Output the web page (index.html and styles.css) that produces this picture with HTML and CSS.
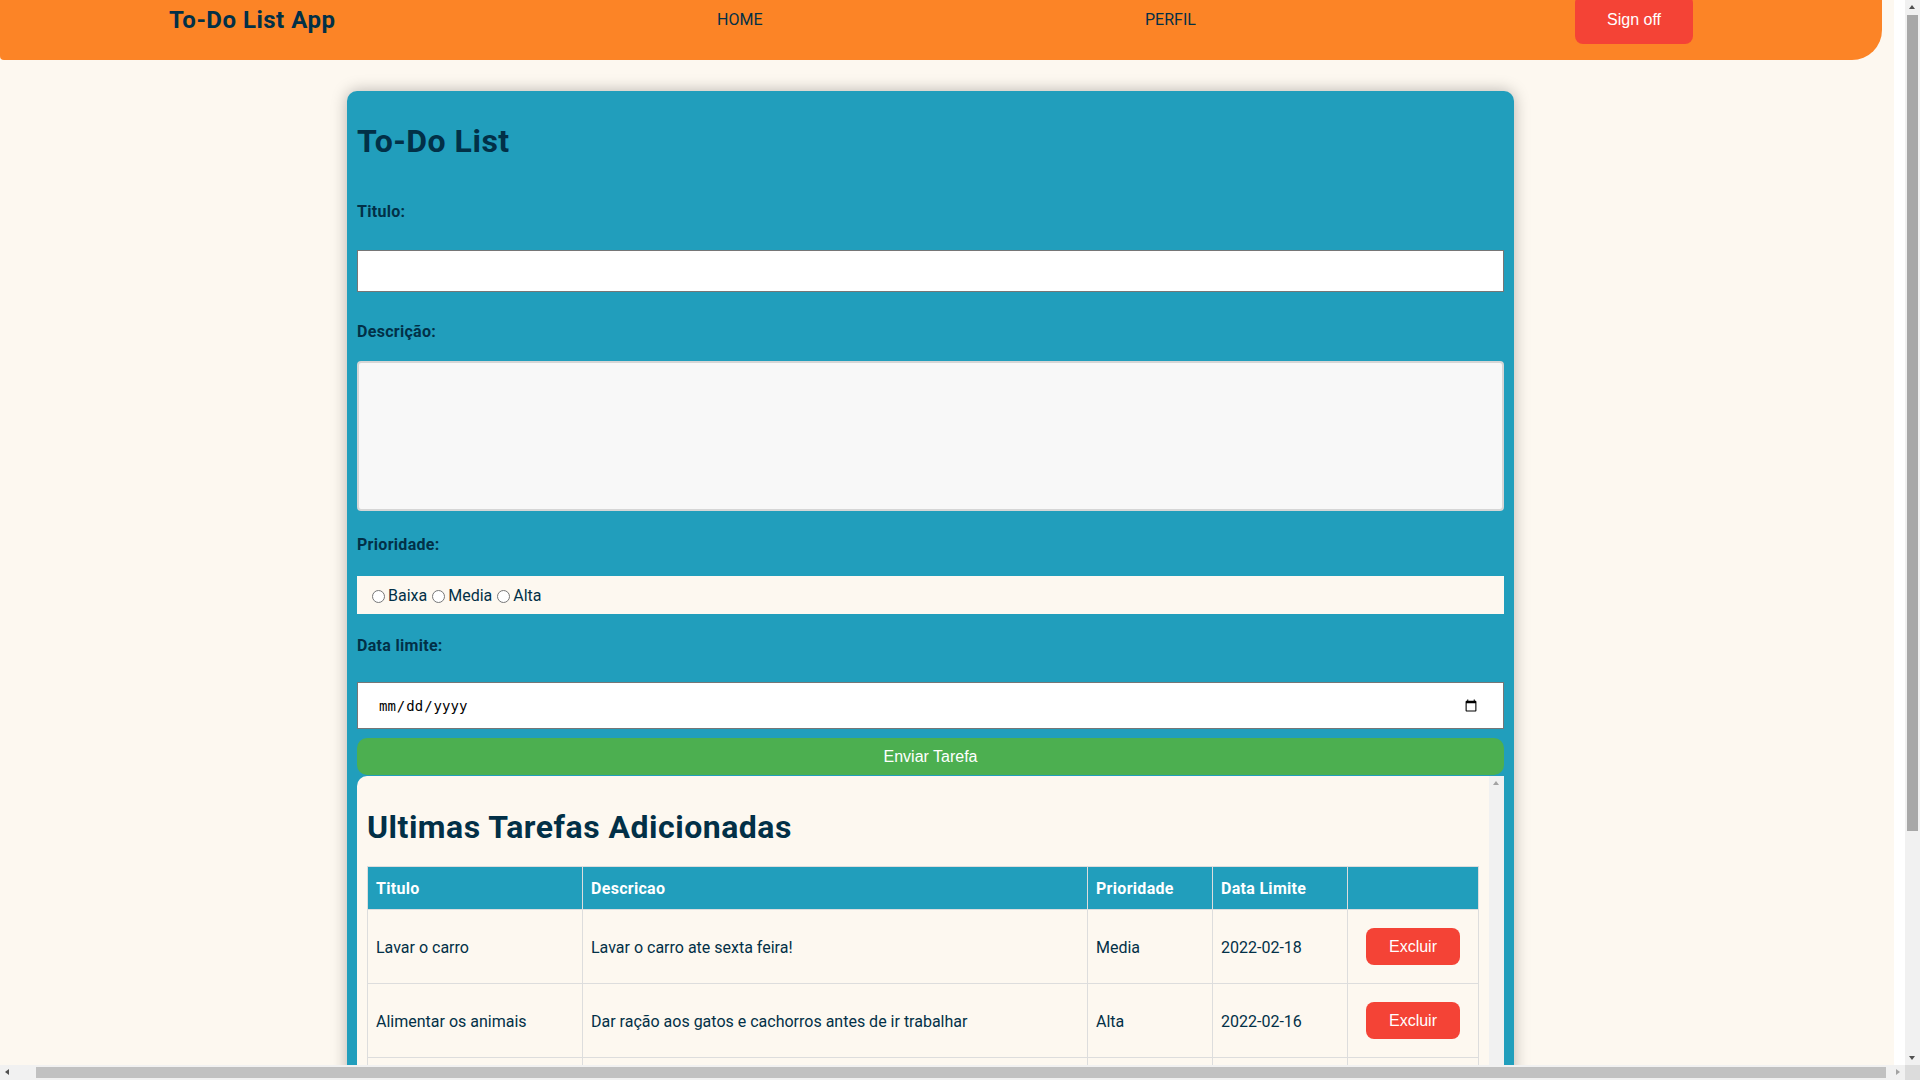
FILE: index.html
```html
<!DOCTYPE html>
<html lang="pt-BR">
<head>
<meta charset="utf-8">
<title>To-Do List App</title>
<link rel="stylesheet" href="styles.css">
</head>
<body>
<div class="app">
  <header class="topbar">
    <div class="brand">To-Do List App</div>
    <a class="nav-link" href="#">HOME</a>
    <a class="nav-link" href="#">PERFIL</a>
    <button class="signoff" type="button">Sign off</button>
  </header>

  <main class="card">
    <h1 class="card-title">To-Do List</h1>

    <label class="field-label lbl-titulo" for="titulo">Titulo:</label>
    <input class="text-input" id="titulo" type="text">

    <label class="field-label lbl-desc" for="descricao">Descrição:</label>
    <textarea class="text-area" id="descricao"></textarea>

    <label class="field-label lbl-prio">Prioridade:</label>
    <div class="radio-box">
      <label class="radio-opt"><input type="radio" name="prioridade" value="Baixa">Baixa</label>
      <label class="radio-opt"><input type="radio" name="prioridade" value="Media">Media</label>
      <label class="radio-opt"><input type="radio" name="prioridade" value="Alta">Alta</label>
    </div>

    <label class="field-label lbl-data" for="data">Data limite:</label>
    <input class="date-input" id="data" type="date">

    <button class="submit-btn" type="button">Enviar Tarefa</button>

    <section class="recent">
      <div class="recent-body">
        <h2 class="recent-title">Ultimas Tarefas Adicionadas</h2>
        <table class="task-table">
          <thead>
            <tr>
              <th class="c-titulo">Titulo</th>
              <th class="c-desc">Descricao</th>
              <th class="c-prio">Prioridade</th>
              <th class="c-data">Data Limite</th>
              <th class="c-acao"></th>
            </tr>
          </thead>
          <tbody>
            <tr>
              <td>Lavar o carro</td>
              <td>Lavar o carro ate sexta feira!</td>
              <td>Media</td>
              <td>2022-02-18</td>
              <td class="acao-cell"><button class="btn-excluir" type="button">Excluir</button></td>
            </tr>
            <tr>
              <td>Alimentar os animais</td>
              <td>Dar ração aos gatos e cachorros antes de ir trabalhar</td>
              <td>Alta</td>
              <td>2022-02-16</td>
              <td class="acao-cell"><button class="btn-excluir" type="button">Excluir</button></td>
            </tr>
            <tr>
              <td>Estudar</td>
              <td>Revisar a matéria para a prova</td>
              <td>Baixa</td>
              <td>2022-02-20</td>
              <td class="acao-cell"><button class="btn-excluir" type="button">Excluir</button></td>
            </tr>
          </tbody>
        </table>
      </div>
      <div class="inner-track" aria-hidden="true"><span class="arrow-up"></span></div>
    </section>
  </main>
</div>

<div class="vscroll" aria-hidden="true">
  <span class="arrow-up"></span>
  <span class="vthumb"></span>
  <span class="arrow-down"></span>
</div>
<div class="hscroll" aria-hidden="true">
  <span class="arrow-left"></span>
  <span class="hthumb"></span>
  <span class="arrow-right"></span>
</div>
<div class="scroll-corner" aria-hidden="true"></div>
</body>
</html>
```

FILE: styles.css
```css
html {
  background: #ffffff;
}

body {
  margin: 0;
  font-family: Roboto, "Liberation Sans", sans-serif;
  color: #023047;
  overflow: hidden;
}

.app {
  width: 1894px;
  min-height: 1350px;
  background: #fdf8f0;
  display: flow-root;
}

/* ---------- header ---------- */
.topbar {
  box-sizing: border-box;
  width: 1882px;
  height: 60px;
  padding-left: 169px;
  background: #fc8426;
  border-radius: 0 0 30px 4px;
  display: grid;
  grid-template-columns: 548px 428px 430px 118px;
  grid-template-rows: 39px;
  align-items: center;
  align-content: start;
}

.brand {
  font-size: 24px;
  font-weight: 700;
  letter-spacing: 0.5px;
  color: #023047;
}

.nav-link {
  font-size: 16px;
  color: #023047;
  text-decoration: none;
}

.signoff {
  width: 118px;
  height: 49px;
  border: 0;
  border-radius: 8px;
  background: #f44336;
  color: #ffffff;
  font-family: "Liberation Sans", Arial, sans-serif;
  font-size: 16px;
  padding: 0;
}

/* ---------- card ---------- */
.card {
  box-sizing: border-box;
  width: 1167px;
  margin: 31px 0 44px 347px;
  padding: 10px;
  background: #219ebc;
  border-radius: 10px;
  box-shadow: 0 0 16px rgba(0, 0, 0, 0.28);
}

.card-title {
  margin: 22px 0 0;
  font-size: 32px;
  line-height: 37px;
  font-weight: 700;
  letter-spacing: 0.5px;
}

.field-label {
  display: block;
  padding-top: 1px;
  font-size: 16px;
  line-height: 19px;
  font-weight: 700;
  letter-spacing: 0.3px;
}

.lbl-titulo { margin-top: 41px; }
.lbl-desc { margin-top: 29px; }
.lbl-prio { margin-top: 23px; }
.lbl-data { margin-top: 21px; }

.text-input {
  display: block;
  box-sizing: border-box;
  width: 100%;
  height: 42px;
  margin: 29px 0 0;
  border: 1px solid #767676;
  background: #ffffff;
  font-size: 16px;
}

.text-area {
  display: block;
  box-sizing: border-box;
  width: 100%;
  height: 150px;
  margin: 20px 0 0;
  border: 2px solid #d6d6d6;
  border-radius: 4px;
  background: #f8f8f8;
  resize: none;
  font-size: 16px;
}

.radio-box {
  box-sizing: border-box;
  height: 38px;
  margin-top: 22px;
  padding: 11px 10px 9px;
  background: #fdf8f0;
  font-size: 16px;
  line-height: 18px;
  display: flex;
  align-items: center;
}

.radio-opt {
  display: flex;
  align-items: center;
}

.radio-opt input {
  margin: 0 3px 0 5px;
  width: 13px;
  height: 13px;
}

.date-input {
  display: block;
  box-sizing: border-box;
  width: 100%;
  height: 47px;
  margin: 27px 0 0;
  padding: 0 23px 0 20px;
  border: 1px solid #767676;
  background: #ffffff;
  font-family: "DejaVu Sans Mono", monospace;
  font-size: 14px;
  color: #000000;
}

.submit-btn {
  display: block;
  width: 100%;
  height: 37px;
  margin-top: 9px;
  border: 0;
  border-radius: 10px;
  background: #4caf50;
  color: #ffffff;
  font-family: "Liberation Sans", Arial, sans-serif;
  font-size: 16px;
}

/* ---------- recent list ---------- */
.recent {
  height: 520px;
  margin-top: 1px;
  overflow: hidden;
  background: #fdf8f0;
  border-top-left-radius: 10px;
  display: flex;
}

.recent-body {
  flex: 1;
  min-width: 0;
  padding: 10px;
}

.inner-track {
  width: 15px;
  flex: none;
  background: #f1f1f1;
  position: relative;
}

.recent-title {
  margin: 23px 0 20px;
  font-size: 32px;
  line-height: 37px;
  font-weight: 700;
  letter-spacing: 0.5px;
}

.task-table {
  width: 100%;
  border-collapse: collapse;
  table-layout: fixed;
  font-size: 16px;
}

.task-table th {
  padding: 13px 8px 11px;
  border: 1px solid #dddddd;
  background: #219ebc;
  color: #ffffff;
  text-align: left;
  font-weight: 700;
  letter-spacing: 0.3px;
  line-height: 18px;
}

.task-table td {
  padding: 9px 8px 7px;
  border: 1px solid #dddddd;
  line-height: 18px;
}

.c-titulo { width: 198px; }
.c-desc { width: 488px; }
.c-prio { width: 108px; }
.c-data { width: 118px; }

.task-table .acao-cell {
  padding: 8px;
  text-align: center;
}

.btn-excluir {
  width: 94px;
  height: 37px;
  margin: 10px 0;
  padding: 0;
  border: 0;
  border-radius: 8px;
  background: #f44336;
  color: #ffffff;
  font-family: "Liberation Sans", Arial, sans-serif;
  font-size: 16px;
  vertical-align: middle;
}

/* ---------- drawn scrollbars ---------- */
.vscroll {
  position: fixed;
  top: 0;
  right: 0;
  width: 15px;
  height: 1065px;
  background: #f1f1f1;
}

.hscroll {
  position: fixed;
  left: 0;
  bottom: 0;
  width: 1905px;
  height: 15px;
  background: #f1f1f1;
}

.scroll-corner {
  position: fixed;
  right: 0;
  bottom: 0;
  width: 15px;
  height: 15px;
  background: #dcdcdc;
}

.vthumb {
  position: absolute;
  left: 2px;
  top: 15px;
  width: 11px;
  height: 816px;
  background: #a8a8a8;
}

.hthumb {
  position: absolute;
  top: 2px;
  left: 36px;
  width: 1850px;
  height: 11px;
  background: #c1c1c1;
}

.arrow-up,
.arrow-down,
.arrow-left,
.arrow-right {
  position: absolute;
  width: 0;
  height: 0;
  border-style: solid;
}

.arrow-up {
  left: 4px;
  top: 5px;
  border-width: 0 3.5px 4px 3.5px;
  border-color: transparent transparent #a3a3a3 transparent;
}

.vscroll .arrow-up {
  border-bottom-color: #505050;
}

.arrow-down {
  left: 4px;
  bottom: 5px;
  border-width: 4px 3.5px 0 3.5px;
  border-color: #505050 transparent transparent transparent;
}

.arrow-left {
  left: 5px;
  top: 4px;
  border-width: 3.5px 4px 3.5px 0;
  border-color: transparent #505050 transparent transparent;
}

.arrow-right {
  right: 5px;
  top: 4px;
  border-width: 3.5px 0 3.5px 4px;
  border-color: transparent transparent transparent #a3a3a3;
}
```
